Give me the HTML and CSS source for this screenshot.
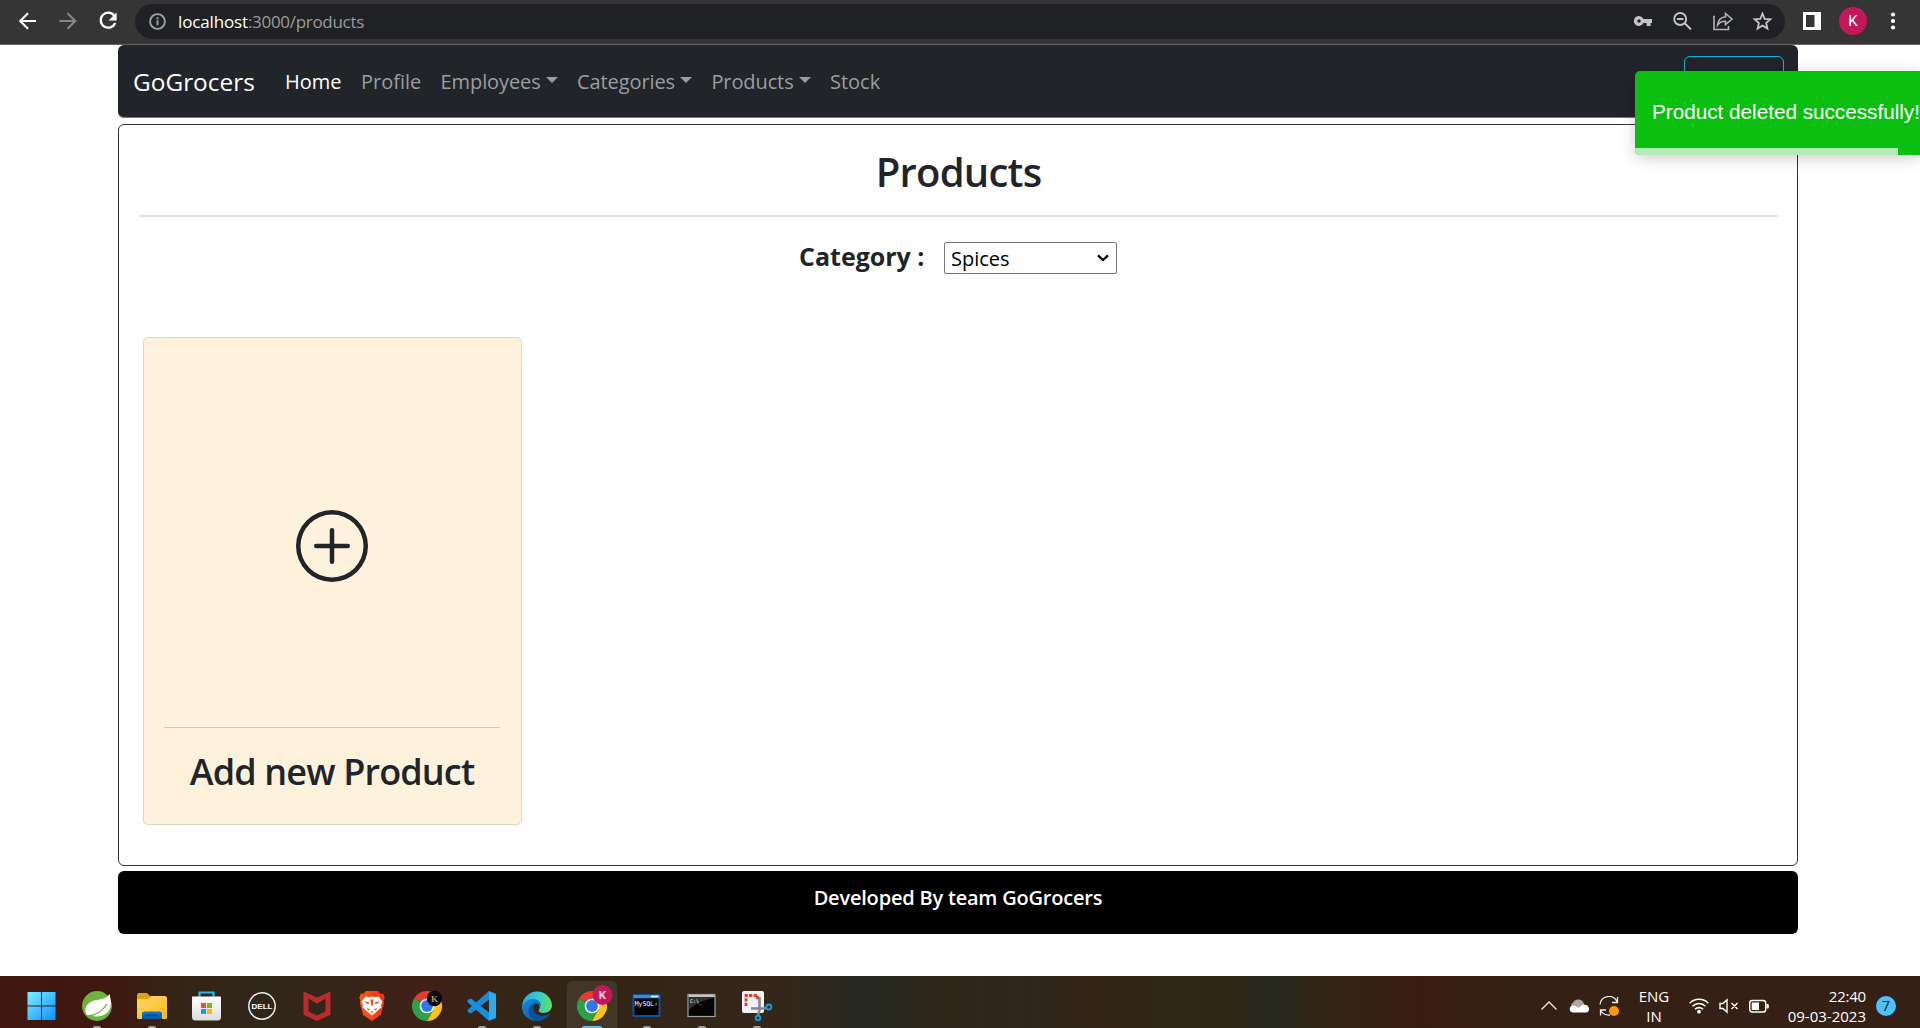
FILE: index.html
```html
<!DOCTYPE html>
<html lang="en">
<head>
<meta charset="utf-8">
<title>GoGrocers</title>
<link rel="stylesheet" href="styles.css">
</head>
<body>
<header class="browser">
  <svg class="ic" viewBox="0 0 24 24"><path d="M20 12H4.5M12 4.2L4.2 12l7.8 7.8" fill="none" stroke="#fff" stroke-width="2.1"/></svg>
  <svg class="ic" viewBox="0 0 24 24"><path d="M3.5 12H19M11.5 4.2l7.8 7.8-7.8 7.8" fill="none" stroke="#868686" stroke-width="2.1"/></svg>
  <svg class="ic" viewBox="0 0 24 24"><path d="M18.3 6.7A7.5 7.5 0 1 0 19.2 14" fill="none" stroke="#fff" stroke-width="2.3"/><path d="M20.6 3.5v8h-8z" fill="#fff"/></svg>
  <div class="address">
    <svg class="info" viewBox="0 0 19 19"><circle cx="9.5" cy="9.5" r="7.4" fill="none" stroke="#9aa0a6" stroke-width="1.9"/><path d="M9.5 8.3v5M9.5 5.3v2" stroke="#9aa0a6" stroke-width="2"/></svg>
    <div class="url"><span class="host">localhost</span><span class="path">:3000/products</span></div>
    <svg class="ic" viewBox="0 0 24 24"><path fill="#c4c4c4" fill-rule="evenodd" d="M12.4 10A5 5 0 1 0 12.4 14H15.6v3h4v-3H21v-4zM8 10.300a1.700 1.700 0 1 1 0 3.400a1.700 1.700 0 0 1 0-3.400z"/></svg>
    <svg class="ic" viewBox="0 0 24 24"><path d="M14 14.500L20 20.500M6 10h6.500" stroke="#c4c4c4" stroke-width="2" fill="none"/><circle cx="9.200" cy="10" r="6" fill="none" stroke="#c4c4c4" stroke-width="1.900"/></svg>
    <svg class="ic" viewBox="0 0 24 24"><path d="M4 7.500H3V20.500H17.500V17M14.500 4.500L21 10l-6.500 5.500v-3.200C11 12.200 8.500 13.400 6.500 16c.5-4.500 3.500-7.700 8-8.200z" fill="none" stroke="#b4b4b4" stroke-width="1.600"/></svg>
    <svg class="ic" viewBox="0 0 24 24"><path d="M11.500 4.500l2.200 5.300 5.700.5-4.300 3.700 1.300 5.600-4.900-3-4.900 3 1.300-5.600-4.300-3.700 5.700-.5z" fill="none" stroke="#c4c4c4" stroke-width="1.800"/></svg>
  </div>
  <svg class="ic panel" viewBox="0 0 24 24"><path fill="#fff" fill-rule="evenodd" d="M3 3h18v18H3zM6 6v12h8.500V6z"/></svg>
  <div class="avatar">K</div>
  <svg class="ic dots" viewBox="0 0 24 24"><g fill="#fff"><circle cx="12" cy="5.500" r="2.100"/><circle cx="12" cy="12" r="2.100"/><circle cx="12" cy="18.500" r="2.100"/></g></svg>
</header>

<div class="container">
  <nav class="navbar">
    <a class="brand">GoGrocers</a>
    <div class="links">
      <a class="link active">Home</a>
      <a class="link">Profile</a>
      <a class="link drop">Employees</a>
      <a class="link drop">Categories</a>
      <a class="link drop">Products</a>
      <a class="link">Stock</a>
    </div>
    <div class="logout"></div>
  </nav>

  <main class="content">
    <h1 class="title">Products</h1>
    <div class="filter">
      <label class="label">Category :</label>
      <div class="select"><span>Spices</span><svg width="14" height="10" viewBox="0 0 14 10"><path d="M2 2.300L7 7l5-4.700" fill="none" stroke="#000" stroke-width="2.300"/></svg></div>
    </div>
    <section class="card">
      <div class="plus"><svg width="72" height="72" viewBox="0 0 16 16" fill="#212529"><path d="M8 15A7 7 0 1 1 8 1a7 7 0 0 1 0 14zm0 1A8 8 0 1 0 8 0a8 8 0 0 0 0 16z"/><path d="M8 4a.5.5 0 0 1 .5.5v3h3a.5.5 0 0 1 0 1h-3v3a.5.5 0 0 1-1 0v-3h-3a.5.5 0 0 1 0-1h3v-3A.5.5 0 0 1 8 4z"/></svg></div>
      <h2 class="caption">Add new Product</h2>
    </section>
  </main>

  <footer class="footer">Developed By team GoGrocers</footer>
</div>

<div class="toast"><span>Product deleted successfully!</span><div class="progress"></div></div>

<div class="taskbar">
  <svg width="0" height="0" class="defs"><defs>
    <linearGradient id="win" x2="1" y2="1"><stop stop-color="#7df0ff"/><stop offset="1" stop-color="#0b8fff"/></linearGradient>
    <linearGradient id="fold" x2="1" y2="1"><stop stop-color="#ffd966"/><stop offset="1" stop-color="#f9b91c"/></linearGradient>
    <linearGradient id="blue" y2="1" x2="0"><stop stop-color="#1377cf"/><stop offset="1" stop-color="#0757a5"/></linearGradient>
    <linearGradient id="bag" y2="1" x2="0"><stop stop-color="#fff"/><stop offset="1" stop-color="#dcdcdc"/></linearGradient>
    <linearGradient id="lion" x2="1"><stop stop-color="#ff5b18"/><stop offset="1" stop-color="#f5301b"/></linearGradient>
    <linearGradient id="edge1" x2="1"><stop stop-color="#2ba9e9"/><stop offset=".5" stop-color="#31c9d5"/><stop offset="1" stop-color="#67de55"/></linearGradient>
    <linearGradient id="edge2" x2="1" y2="1"><stop stop-color="#168bd9"/><stop offset="1" stop-color="#0c4f9d"/></linearGradient>
    <g id="chrome"><path d="M15 15L2 7.500A15 15 0 0 1 28 7.500z" fill="#e53b31"/><path d="M15 15L2 7.500A15 15 0 0 0 15 30l6.500-11.200z" fill="#2ba14b"/><path d="M15 30A15 15 0 0 0 28 7.500H15l6.500 11.200z" fill="#fcc31d"/><circle cx="15" cy="15" r="7.300" fill="#fff"/><circle cx="15" cy="15" r="5.900" fill="#2f78e8"/></g>
  </defs></svg>
  <div class="apps">
    <div class="app"><svg viewBox="0 0 30 30"><path fill="url(#win)" d="M.5 1h13.500v13.500H.5zM15 1h13.500v13.500H15zM.5 15.500h13.500V29H.5zM15 15.500h13.500V29H15z"/></svg></div>
    <div class="app run"><svg viewBox="0 0 30 30"><circle cx="15" cy="15" r="14.900" fill="#6db33f"/><path d="M27.500 3c2 8 2.500 14-2 18.500-5 5-13 4.500-20.500 2.500C1 18 5 11.500 12 9.500c6-1.500 12-1 15.500-6.500z" fill="#fff"/><path d="M5.500 25c9-.5 14.500-4 19.500-12" fill="none" stroke="#6db33f" stroke-width="1.300"/></svg></div>
    <div class="app run"><svg viewBox="0 0 30 30"><path d="M0 4a2 2 0 0 1 2-2h8l3 3v6H0z" fill="#e2a00b"/><path d="M0 8h11l3-3h14a2 2 0 0 1 2 2v19.500a1.500 1.500 0 0 1-1.500 1.500h-27A1.500 1.500 0 0 1 0 26.500z" fill="url(#fold)"/><path d="M5 28v-5a2.500 2.500 0 0 1 2.500-2.500h15A2.500 2.500 0 0 1 25 23v5z" fill="url(#blue)"/><path d="M9 24.300h12" stroke="#06417e" stroke-width="1.200"/></svg></div>
    <div class="app"><svg viewBox="0 0 30 30"><path d="M7.500 6V1.500h14V6" fill="none" stroke="#27b8ea" stroke-width="2.200"/><path d="M0 5.500h29V26a3.500 3.500 0 0 1-3.500 3.500h-22A3.500 3.500 0 0 1 0 26z" fill="url(#bag)"/><path fill="#f25022" d="M9 12h5v5H9z"/><path fill="#7fba00" d="M15 12h5v5h-5z"/><path fill="#00a4ef" d="M9 18h5v5H9z"/><path fill="#ffb900" d="M15 18h5v5h-5z"/></svg></div>
    <div class="app"><svg viewBox="0 0 30 30"><circle cx="15" cy="15" r="13.200" fill="none" stroke="#eee" stroke-width="1.500"/><text x="4.500" y="18" class="dell" textLength="21" lengthAdjust="spacingAndGlyphs">DELL</text></svg></div>
    <div class="app"><svg viewBox="0 0 30 30"><path fill="#bd2a2e" d="M1.500.5L15 6.500 28.500.5v23.200L15 30 1.500 23.700zM6.500 7.500v13l8.500 4 8.500-4v-13L15 12.800z"/></svg></div>
    <div class="app"><svg viewBox="0 0 30 30"><path fill="url(#lion)" d="M9 0h12l2.500 2.800 2.500-.3 1.700 4-1 3 .5 2.500-3.500 12L15 30 6.300 24 2.800 12l.5-2.500-1-3 1.700-4 2.500.3z"/><path fill="#fff" d="M8.500 5.500l4 .7L15 5.500l2.500.7 4-.7 4 5.200-1.500 3 .5 2.500-5 4.500L15 24.500l-4.500-3.800-5-4.500.5-2.500-1.500-3z"/><path fill="#f64b1b" d="M7 10l5.500 1.500-1.500 2zM23 10l-5.500 1.500 1.500 2zM10 17l3.500 1.500-2.500 1zM20 17l-3.500 1.500 2.500 1zM13.500 8.500h3l-.7 6h-1.600zM13 20.500h4l-2 1.500z"/></svg></div>
    <div class="app"><svg viewBox="0 0 30 30"><use href="#chrome"/><circle cx="22.500" cy="7.500" r="7.700" fill="#090716"/><text x="19" y="11" class="mini" fill="#b49a62">K</text></svg></div>
    <div class="app run"><svg viewBox="0 0 30 30"><path d="M22 0l7 3v24l-7 3z" fill="#2ea8ef"/><path d="M22 0v8.500L4 22.500 1.500 21.500Q-.5 20 1 18.500z" fill="#168bd7"/><path d="M22 30v-8.500L4 7.500 1.500 8.500Q-.5 10 1 11.500z" fill="#1592df"/></svg></div>
    <div class="app run"><svg viewBox="0 0 30 30"><path d="M.3 13A15 15 0 0 1 30 14c.3 5-4 8-8.500 8-4 0-5.500-1.800-4.500-3.500 2.500-4-1-7.500-5.500-7.500C7 11 2 12 .3 18z" fill="url(#edge1)"/><path d="M0 16C1 11.500 6 8 11 8c5.500 0 8.500 4 8 8-.5-2-3-4-6-3.500C6.500 16 11 25.500 20 25c4 0 6.500-2 8-2.500C25 27.500 20 30 15 30 7 30-.5 24 0 16z" fill="url(#edge2)"/><path d="M13 12.500C6 14 3 24 13 29.700c6 1 12-2 15-7.200-5 3-11 3.500-14.500-.5-2.500-3-2.500-6.500-.5-9.500z" fill="#0c519f"/></svg></div>
    <div class="app current"><svg viewBox="0 0 30 30"><use href="#chrome"/><circle cx="25.500" cy="4" r="10" fill="#c2185b"/><text x="21.700" y="8.200" class="badge">K</text></svg></div>
    <div class="app run"><svg viewBox="0 0 30 30"><rect x=".5" y="3" width="28" height="23" rx="1.500" fill="#174e9b"/><path d="M1.500 4h26v3h-26z" fill="#318de0"/><path d="M19 5.500h7" stroke="#e9eef8" stroke-width="1.600"/><path d="M2.500 7.500h24V24h-24z" fill="#020202"/><text x="2.800" y="15.300" class="con" textLength="23">MySQL›</text></svg></div>
    <div class="app run"><svg viewBox="0 0 30 30"><rect x="1" y="3.500" width="27" height="22" fill="#050505" stroke="#a2a2a2" stroke-width="1.200"/><path d="M1.500 4h26v2.200h-26z" fill="#c5c5c5"/><path d="M2 7h24C17 9 7 13 2 19z" fill="#333"/><text x="3" y="11.500" class="tiny">C:\_</text></svg></div>
    <div class="app run"><svg viewBox="0 0 30 30"><rect width="22" height="22" rx="2" fill="#f3f3f3"/><path d="M4 15V4.500h11.500V9" fill="none" stroke="#e33c20" stroke-width="2.800" stroke-dasharray="3.300 1.200"/><path d="M17.500 6v13L16 24M9 17.500h13l3-1" fill="none" stroke="#7e8990" stroke-width="2.600"/><circle cx="26.800" cy="16" r="2.500" fill="none" stroke="#159be3" stroke-width="1.900"/><circle cx="16" cy="27" r="2.300" fill="none" stroke="#159be3" stroke-width="1.900"/></svg></div>
  </div>
  <div class="tray">
    <svg class="t" viewBox="0 0 20 20"><path d="M2.500 13.500L10 6l7.500 7.500" fill="none" stroke="#eee" stroke-width="1.300"/></svg>
    <svg class="t" viewBox="0 0 20 20"><path d="M3.500 13A4 4 0 0 1 4 6.500 6 6 0 0 1 15 8l2 5z" fill="#aaa5a1"/><path d="M3.500 16.500A3.600 3.600 0 0 1 3.500 9.500c3 0 4 1 6 2.200l4-2.700c4-1 6.500 1 6.500 4a3.500 3.500 0 0 1-3.500 3.500z" fill="#fff"/></svg>
    <svg class="t" viewBox="0 0 20 20"><path d="M1 8.500A9 9 0 0 1 18 5.500M18.500 1v5.500H13M1.500 19.500V14H7M2 15c2 3 5 4.500 9 4" fill="none" stroke="#eee" stroke-width="1.300"/><circle cx="15" cy="15" r="5" fill="#ff9800"/></svg>
    <div class="lang"><span>ENG</span><span>IN</span></div>
    <svg class="t" viewBox="0 0 20 20"><g fill="none" stroke="#fff" stroke-width="1.600"><path d="M.7 7.200a13 13 0 0 1 18.600 0M3.500 10.300a9 9 0 0 1 13 0M6 13.300a5.600 5.600 0 0 1 8 0"/></g><circle cx="10" cy="15.700" r="1.900" fill="#fff"/></svg>
    <svg class="t" viewBox="0 0 20 20"><path d="M1 7.500h3L8 3.800v12.400L4 12.500H1zM12.500 7l6 6M18.500 7l-6 6" fill="none" stroke="#fff" stroke-width="1.400"/></svg>
    <svg class="t" viewBox="0 0 20 20"><rect x=".7" y="4.500" width="16" height="11.500" rx="2.500" fill="none" stroke="#fff" stroke-width="1.400"/><path d="M2.700 6.500H10v7.500H2.700zM17.500 8h1.300a1 1 0 0 1 1 1v2.500a1 1 0 0 1-1 1h-1.300z" fill="#fff"/></svg>
    <div class="clock"><span class="time">22:40</span><span>09-03-2023</span></div>
    <div class="count">7</div>
  </div>
</div>
</body>
</html>
```
FILE: styles.css
```css
* { box-sizing: border-box; }
body {
  margin: 0;
  height: 1028px;
  overflow: hidden;
  display: flex;
  flex-direction: column;
  background: #fff;
  color: #212529;
  font-family: "Open Sans", "Noto Sans", sans-serif;
  font-size: 20px;
  white-space: nowrap;
}
svg { display: block; flex: none; }

/* browser toolbar */
.browser {
  flex: none;
  height: 45px;
  padding: 0 0 2px 16px;
  display: flex;
  align-items: center;
  gap: 16px;
  background: #353535;
  border-bottom: 1px solid #656363;
}
.ic { width: 24px; height: 24px; }
.address {
  width: 1650px;
  height: 35px;
  margin-left: -1px;
  padding: 0 10px 0 13px;
  display: flex;
  align-items: center;
  gap: 16px;
  border-radius: 18px;
  background: #202124;
}
.info { width: 19px; height: 19px; }
.url { flex: 1; margin-left: -5px; padding-top: 1px; font-size: 17px; line-height: 24px; }
.host { color: #fff; letter-spacing: -.15px; }
.path { color: #9a9b9d; letter-spacing: -.3px; }
.panel { margin-left: -1px; }
.avatar {
  width: 28px;
  height: 28px;
  margin-left: -1px;
  border-radius: 50%;
  background: #c2185b;
  color: #fff;
  font: 15px/28px Roboto, sans-serif;
  text-align: center;
}
.dots { margin-left: -2px; }

/* page */
.container {
  width: 1680px;
  margin-left: 118px;
  flex: 1;
  display: flex;
  flex-direction: column;
}
.navbar {
  height: 73px;
  padding: 0 14px 0 15px;
  display: flex;
  align-items: center;
  border-radius: 6px;
  background: #212529;
  border-bottom: 1px solid #77797b;
}
.brand { width: 152px; font-size: 24.4px; color: #fff; }
.links { flex: 1; display: flex; gap: 19.4px; }
.link { color: #9b9d9e; display: flex; align-items: center; }
.active { color: #fff; }
.drop { letter-spacing: -.1px; }
.drop::after {
  content: "";
  margin: -3px 0 0 5px;
  border: 6px solid transparent;
  border-top-color: currentColor;
  border-bottom: 0;
}
.logout {
  width: 100px;
  height: 50px;
  border: 1px solid #17b4da;
  border-radius: 6px;
}
.content {
  height: 742px;
  margin-top: 6px;
  padding: 0 19px 0 20px;
  border: 1px solid #333;
  border-radius: 6px;
}
.title {
  height: 92px;
  margin: 0;
  border-bottom: 2px solid #dedfdf;
  font-size: 40px;
  font-weight: 600;
  line-height: 93px;
  letter-spacing: -.75px;
  text-align: center;
}
.filter {
  height: 120px;
  padding: 25px 0 0 660px;
  display: flex;
  gap: 18px;
}
.label { width: 127px; font-size: 25px; font-weight: 700; line-height: 29px; }
.select {
  width: 173px;
  height: 32px;
  padding: 0 6px;
  display: flex;
  align-items: center;
  justify-content: space-between;
  border: 1px solid #767676;
  border-radius: 2px;
  color: #000;
}
.card {
  width: 379px;
  height: 488px;
  margin-left: 4px;
  padding: 0 21px 0 20px;
  border: 1px solid #e2d7c5;
  border-radius: 5px;
  background: #fff2dd;
}
.plus {
  height: 390px;
  padding: 26px 1px 0 0;
  display: flex;
  align-items: center;
  justify-content: center;
  border-bottom: 1px solid #d2c9b9;
}
.caption {
  margin: 0;
  font-size: 36px;
  font-weight: 600;
  line-height: 87px;
  letter-spacing: -.85px;
  text-align: center;
}
.footer {
  height: 63px;
  margin-top: 5px;
  border-radius: 6px;
  background: #000;
  color: #fff;
  font-weight: 600;
  line-height: 53px;
  letter-spacing: -.2px;
  text-align: center;
}

/* notification over the page */
.toast {
  position: absolute;
  left: 1635px;
  top: 71px;
  width: 285px;
  height: 84px;
  padding-left: 17px;
  border-radius: 5px 0 0 5px;
  background: #0abf0f;
  color: #fff;
  font: 20.800px/82px "Liberation Sans", sans-serif;
  letter-spacing: -.05px;
  box-shadow: 0 3px 15px rgba(0, 0, 0, .2);
}
.progress {
  position: absolute;
  left: 0;
  bottom: 0;
  width: 263px;
  height: 7px;
  border-radius: 0 0 0 5px;
  background: #b5ebb7;
}

/* taskbar */
.taskbar {
  flex: none;
  height: 52px;
  display: flex;
  justify-content: space-between;
  background: linear-gradient(90deg, #41170f 0, #40180f 110px, #352415 170px, #302718 260px, #36251a 350px, #412016 430px, #342516 510px, #322516 640px, #35261a 790px, #272820 850px, #262820 880px, #302519 940px, #2f261c 1020px, #322415 1100px, #302715 1160px, #302616 1230px, #262820 1270px, #312515 1320px, #3a1d12 1420px, #342014 1520px, #342014 100%);
}
.defs { position: absolute; }
.apps { display: flex; padding-left: 14px; }
.app {
  width: 55px;
  height: 52px;
  padding: 15px 12.5px 0;
  display: flex;
  flex-direction: column;
  align-items: center;
}
.app svg { width: 30px; height: 30px; overflow: visible; }
.run::after, .current::after {
  content: "";
  width: 8px;
  height: 2px;
  margin-top: 5px;
  border-radius: 2px 2px 0 0;
  background: #a59d95;
}
.current {
  width: 50px;
  height: 47px;
  margin: 5px 2.5px 0;
  padding-top: 10px;
  border-radius: 5px 5px 0 0;
  background: #423629;
}
.current::after { width: 20px; background: #4cc2ff; }
.dell { font: 700 8px "Liberation Sans", sans-serif; fill: #fff; }
.mini { font: 700 9px "Liberation Serif", serif; }
.badge { font: 700 11.5px Roboto, sans-serif; fill: #f5cfe0; }
.con { font: 6.5px "DejaVu Sans Mono", monospace; fill: #fff; }
.tiny { font: 5px "DejaVu Sans Mono", monospace; fill: #fff; }
.tray {
  display: flex;
  align-items: center;
  padding: 7px 24px 0 0;
  gap: 10px;
  color: #fff;
  font-size: 15px;
  line-height: 20px;
}
.t { width: 20px; height: 20px; }
.lang { width: 50px; display: flex; flex-direction: column; align-items: center; }
.clock { width: 87px; display: flex; flex-direction: column; align-items: flex-end; }
.time { letter-spacing: -.2px; }
.count {
  width: 20px;
  height: 20px;
  border-radius: 50%;
  background: #4cc2ff;
  color: #111;
  font-size: 14px;
  text-align: center;
}
```
